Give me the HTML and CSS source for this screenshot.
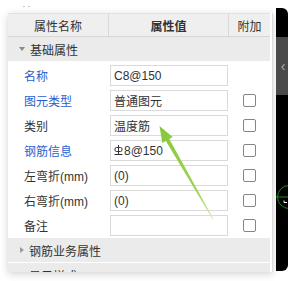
FILE: index.html
```html
<!DOCTYPE html>
<html lang="zh">
<head>
    <meta charset="UTF-8">
    <title>属性</title>
    <link rel="stylesheet" href="styles.css">
</head>
<body>
    <div class="stage">
        <div class="dock">
            <div class="grip"><i></i><i></i></div>
            <div class="panel">
                <div class="head">
                    <div class="hcell">属性名称</div>
                    <div class="hcell strong">属性值</div>
                    <div class="hcell">附加</div>
                </div>
                <div class="group open"><span class="tri"></span>基础属性</div>
                <div class="row">
                    <div class="name link">名称</div>
                    <div class="field">C8@150</div>
                    <div class="extra"></div>
                </div>
                <div class="row">
                    <div class="name link">图元类型</div>
                    <div class="field">普通图元</div>
                    <div class="extra"><span class="check"></span></div>
                </div>
                <div class="row">
                    <div class="name">类别</div>
                    <div class="field">温度筋</div>
                    <div class="extra"><span class="check"></span></div>
                </div>
                <div class="row">
                    <div class="name link">钢筋信息</div>
                    <div class="field">
                        <svg class="grade" width="9" height="11" viewBox="0 0 9 11">
                            <rect x="1" y="2.5" width="7" height="4" rx="1.5" fill="none" stroke="#333" stroke-width="1"/>
                            <line x1="4.5" y1="0" x2="4.5" y2="9.5" stroke="#333" stroke-width="1"/>
                            <line x1="0.5" y1="9.5" x2="8.5" y2="9.5" stroke="#333" stroke-width="1"/>
                        </svg>8@150
                    </div>
                    <div class="extra"><span class="check"></span></div>
                </div>
                <div class="row">
                    <div class="name">左弯折(mm)</div>
                    <div class="field">(0)</div>
                    <div class="extra"><span class="check"></span></div>
                </div>
                <div class="row">
                    <div class="name">右弯折(mm)</div>
                    <div class="field">(0)</div>
                    <div class="extra"><span class="check"></span></div>
                </div>
                <div class="row">
                    <div class="name">备注</div>
                    <div class="field"></div>
                    <div class="extra"><span class="check"></span></div>
                </div>
                <div class="group shut first"><span class="tri"></span>钢筋业务属性</div>
                <div class="group shut"><span class="tri"></span>显示样式</div>
            </div>
        </div>

        <div class="viewport">
            <div class="tab">&lsaquo;</div>
            <svg class="marker" width="12" height="30" viewBox="0 0 12 30">
                <circle cx="13" cy="12" r="11.5" fill="none" stroke="#1f8a1f" stroke-width="1"/>
                <line x1="0" y1="12" x2="12" y2="12" stroke="#1f8a1f" stroke-width="1"/>
                <path d="M8 15.5 L8 17.5 L11 17.5" fill="none" stroke="#fff" stroke-width="1"/>
            </svg>
        </div>

        <svg class="pointer" width="296" height="281" viewBox="0 0 296 281">
            <defs>
                <linearGradient id="fade" x1="160" y1="126" x2="213" y2="219" gradientUnits="userSpaceOnUse">
                    <stop offset="0" stop-color="#86c83a"/>
                    <stop offset="0.7" stop-color="#9fd356"/>
                    <stop offset="1" stop-color="#d6edb8"/>
                </linearGradient>
            </defs>
            <polygon points="159.5,126 172.7,136.9 169.3,138.9 213.4,218.8 212.6,219.2 165.9,140.9 162.3,142.9" fill="url(#fade)"/>
        </svg>
    </div>
</body>
</html>
```

FILE: styles.css
```css
body {
    margin: 0;
    background-color: #ffffff;
    font-family: "Liberation Sans", "Noto Sans CJK SC", sans-serif;
    font-size: 12px;
    color: #333;
    overflow: hidden;
}
.stage {
    position: relative;
    display: flex;
    gap: 3px;
    padding-left: 8px;
    width: 296px;
    height: 281px;
    box-sizing: border-box;
}
.grip {
    display: flex;
    gap: 3px;
    height: 13px;
    padding: 6px 0 0 15px;
    box-sizing: border-box;
}
.grip i {
    width: 2px;
    height: 1px;
    background-color: #c8c8c8;
}
.panel {
    width: 265px;
    height: 259px;
    box-sizing: border-box;
    padding-right: 2px;
    border-right: 1px solid #dcdcdc;
    background-color: #fff;
    box-shadow: 0 2px 8px rgba(0, 0, 0, 0.18);
    overflow: hidden;
}
.head {
    display: grid;
    grid-template-columns: 101px 120px 41px;
    height: 24px;
    box-sizing: border-box;
    border-top: 1px solid #e2e2e2;
    border-bottom: 1px solid #d6d6d6;
    background-color: #efefef;
}
.hcell {
    display: flex;
    align-items: center;
    justify-content: center;
    border-right: 1px solid #d8d8d8;
}
.hcell:last-child {
    border-right: none;
}
.strong {
    font-weight: bold;
}
.group {
    display: flex;
    align-items: center;
    gap: 5px;
    height: 24px;
    padding-left: 11px;
    background-color: #ebebeb;
}
.group.first {
    margin-top: 2px;
}
.group.shut + .group.shut {
    margin-top: 1px;
}
.tri {
    width: 0;
    height: 0;
}
.open .tri {
    border-left: 3px solid transparent;
    border-right: 3px solid transparent;
    border-top: 4px solid #8a8a8a;
}
.shut .tri {
    border-top: 3px solid transparent;
    border-bottom: 3px solid transparent;
    border-left: 4px solid #9a9a9a;
    margin-left: 1px;
}
.row {
    display: grid;
    grid-template-columns: 101px 120px 41px;
    align-items: center;
    height: 25px;
    padding-top: 4px;
    box-sizing: border-box;
}
.name {
    padding-left: 16px;
}
.link {
    color: #1f5fd0;
}
.field {
    display: flex;
    align-items: center;
    margin: 0 1px;
    height: 21px;
    padding-left: 3px;
    box-sizing: border-box;
    border: 1px solid #dadada;
    background-color: #fff;
}
.grade {
    margin-right: 1px;
}
.extra {
    display: flex;
    justify-content: center;
}
.check {
    width: 13px;
    height: 13px;
    box-sizing: border-box;
    border: 1px solid #858585;
    border-radius: 2px;
    background-color: #fff;
}
.viewport {
    position: relative;
    margin-top: 8px;
    width: 12px;
    height: 263px;
    background-color: #000;
    border-radius: 0 6px 6px 0;
    overflow: hidden;
}
.tab {
    margin-top: 29px;
    height: 58px;
    background-color: #4a4a4a;
    color: #b0b0b0;
    font-size: 14px;
    line-height: 58px;
    text-align: center;
    padding-left: 2px;
}
.marker {
    position: absolute;
    left: 0;
    top: 177px;
}
.pointer {
    position: absolute;
    left: 0;
    top: 0;
    pointer-events: none;
}
```
